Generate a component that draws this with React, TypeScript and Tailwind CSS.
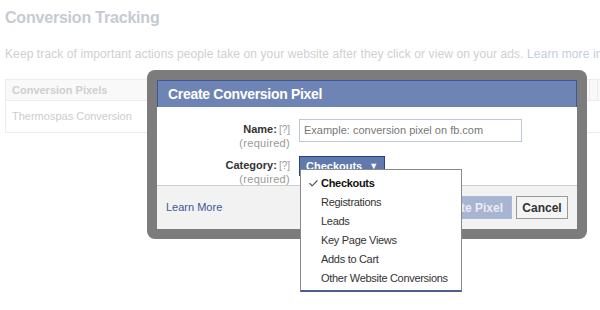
import { Check } from 'lucide-react'

const font = { fontFamily: '"Liberation Sans", Arial, sans-serif' }

const options = [
  'Checkouts',
  'Registrations',
  'Leads',
  'Key Page Views',
  'Adds to Cart',
  'Other Website Conversions',
]

function Label({ name }: { name: string }) {
  return (
    <div className="text-right leading-[12px]">
      <div>
        <span className="text-[11px] font-bold text-[#333]">{name}:</span>
        <span className="ml-[2px] text-[10px] text-[#999]">[?]</span>
      </div>
      <div className="mt-[1px] text-[11px] tracking-[0.3px] text-[#999]">(required)</div>
    </div>
  )
}

export default function App() {
  return (
    <div className="relative h-[310px] w-[600px] overflow-hidden bg-white" style={font}>
      {/* faded page behind the dialog */}
      <div className="pl-[5px] pt-[8px]">
        <h1 className="text-[16px] font-bold leading-[20px] tracking-[-0.2px] text-[#c6cad2]">Conversion Tracking</h1>
        <p className="mt-[19px] whitespace-nowrap text-[12px] leading-[14px] tracking-[0.1px] text-[#cfcfcf]">
          Keep track of important actions people take on your website after they click or view on your ads.{' '}
          <span className="text-[#c5cde0]">Learn more in</span>
        </p>
        <div className="mt-[18px] w-[620px] border border-[#ececec]">
          <div className="flex h-[21px] items-center border-b border-[#ececec] bg-[#f9f9f9] text-[11px] font-bold text-[#cfcfcf]">
            <div className="w-[583px] pl-[6px]">Conversion Pixels</div>
            <div className="h-full w-[8px] border-l border-[#ececec]" />
            <div className="h-full flex-1 border-l border-[#ececec]" />
          </div>
          <div className="flex h-[31px] items-center pl-[6px] text-[11px] text-[#cdcdcd]">
            Thermospas Conversion
          </div>
        </div>
      </div>

      {/* dialog */}
      <div className="absolute left-[147px] top-[70px] w-[440px] rounded-[8px] bg-[#7c7c7c] p-[10px]">
        <div className="flex h-[27px] items-center border border-b-0 border-[#3b5998] bg-[#6d84b4] pl-[10px] text-[14px] font-bold tracking-[-0.3px] text-white">
          Create Conversion Pixel
        </div>
        <div className="h-[78px] bg-white pt-[12px]">
          <div className="grid grid-cols-[133px_1fr] items-start gap-x-[9px] gap-y-[7px]">
            <div className="pt-[3px]">
              <Label name="Name" />
            </div>
            <div className="flex h-[23px] w-[223px] items-center border border-[#bdc7d8] pl-[4px] text-[11px] text-[#777]">
              Example: conversion pixel on fb.com
            </div>
            <div className="pt-[2px]">
              <Label name="Category" />
            </div>
            <div className="flex h-[20px] w-[86px] items-center gap-[7px] border border-b-0 border-[#29447e] bg-[#6179ad] pl-[6px] text-[11px] font-bold text-white">
              Checkouts
              <span className="text-[9px]">▼</span>
            </div>
          </div>
        </div>
        <div className="flex h-[44px] items-center justify-between border-t border-[#cccccc] bg-[#f2f2f2] pl-[9px] pr-[9px]">
          <span className="text-[11px] text-[#3b5998]">Learn More</span>
          <div className="flex gap-[4px]">
            <div className="flex h-[23px] items-center border border-[#aab8d4] bg-[#a8b5d2] px-[8px] text-[12px] font-bold text-[#e8ecf4]">
              Create Pixel
            </div>
            <div className="flex h-[23px] w-[52px] items-center justify-center border border-[#999] bg-[#f4f4f4] text-[12px] font-bold text-[#333]">
              Cancel
            </div>
          </div>
        </div>
      </div>

      {/* dropdown menu */}
      <div className="absolute left-[300px] top-[169px] w-[162px] border border-b-2 border-[#8a8a8a] border-b-[#4a5f8e] bg-white pb-[2px] pt-[4px]">
        {options.map((o, i) => (
          <div key={o} className="flex h-[19px] items-center text-[11px] tracking-[-0.3px] text-[#333]">
            <span className="flex w-[20px] justify-end pr-[2px]">
              {i === 0 && <Check className="h-[11px] w-[11px] text-[#555]" strokeWidth={2.5} />}
            </span>
            <span className={i === 0 ? 'font-bold text-[#111]' : ''}>{o}</span>
          </div>
        ))}
      </div>
    </div>
  )
}
